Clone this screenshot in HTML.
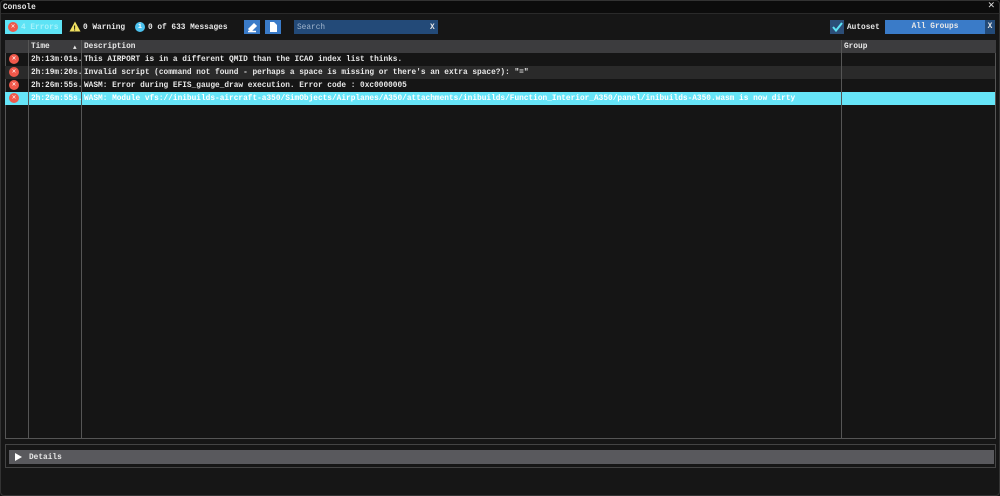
<!DOCTYPE html><html><head><style>
*{margin:0;padding:0;box-sizing:border-box}
body{width:1000px;height:496px;background:#161616;font-family:"Liberation Mono",monospace;font-size:7.8px;font-weight:bold;color:#e8e8e8;position:relative;overflow:hidden}
.a{position:absolute}
.ic{position:absolute;width:10px;height:10px;border-radius:50%;background:#f0584a;color:#fff;font-size:7px;line-height:10px;text-align:center}
.row{position:absolute;left:5px;width:990px;height:13px;line-height:15px}
.t{position:absolute;left:26px}
.d{position:absolute;left:79px;white-space:nowrap}
</style></head><body>
<div class="a" style="left:0;top:0;width:1000px;height:14px;background:#0c0c0c;border-bottom:1px solid #2a2a2a"></div>
<div class="a" style="left:3px;top:3px;line-height:10px">Console</div>
<div class="a" style="left:988px;top:1px;font-size:11px;line-height:11px;color:#ddd">✕</div>
<div class="a" style="left:0;top:0;width:1000px;height:496px;border:1px solid #333;border-radius:4px"></div>
<div class="a" style="left:5px;top:20px;width:57px;height:14px;background:#5ee3f5"></div>
<div class="ic" style="left:8px;top:22px">✕</div>
<div class="a" style="left:21px;top:21px;line-height:14px;color:#a6f2fb">4 Errors</div>
<svg class="a" style="left:69px;top:21px" width="12" height="11"><path d="M6 0.5L11.5 10.5H0.5Z" fill="#f0e060"/><text x="4.5" y="9.5" font-size="7" fill="#000" font-family="Liberation Sans">!</text></svg>
<div class="a" style="left:83px;top:21px;line-height:14px">0 Warning</div>
<div class="a" style="left:135px;top:22px;width:10px;height:10px;border-radius:50%;background:#4cc2ef;color:#fff;font-size:7px;line-height:10px;text-align:center">i</div>
<div class="a" style="left:148px;top:21px;line-height:14px">0 of 633 Messages</div>
<div class="a" style="left:244px;top:20px;width:16px;height:14px;background:#3a7bc8"></div>
<svg class="a" style="left:246px;top:21px" width="12" height="12"><path d="M3 8L8 3L10 5L5 10ZM2 10.5H10" stroke="#fff" stroke-width="1.5" fill="#fff"/></svg>
<div class="a" style="left:265px;top:20px;width:16px;height:14px;background:#3a7bc8"></div>
<svg class="a" style="left:268px;top:21px" width="10" height="12"><path d="M2 1H6L9 4V11H2Z" fill="#fff"/></svg>
<div class="a" style="left:294px;top:20px;width:144px;height:14px;background:#234a78"></div>
<div class="a" style="left:297px;top:21px;line-height:14px;color:#9fb4cc;font-weight:normal">Search</div>
<div class="a" style="left:430px;top:21px;line-height:14px">X</div>
<div class="a" style="left:830px;top:20px;width:14px;height:14px;background:#2c4e78"></div>
<svg class="a" style="left:831px;top:21px" width="12" height="12"><path d="M2 6L5 9.5L11 2" stroke="#5ee3f5" stroke-width="2" fill="none"/></svg>
<div class="a" style="left:847px;top:21px;line-height:14px">Autoset</div>
<div class="a" style="left:885px;top:20px;width:100px;height:14px;background:#3a7bc8;text-align:center;line-height:15px">All Groups</div>
<div class="a" style="left:985px;top:20px;width:10px;height:14px;background:#234a78;text-align:center;line-height:15px">X</div>
<div class="a" style="left:5px;top:40px;width:991px;height:399px;border:1px solid #555;background:#151515"></div>
<div class="a" style="left:5px;top:40px;width:991px;height:13px;background:#3c3c3e"></div>
<div class="row" style="top:66px;background:#2a2a2a"></div>
<div class="row" style="top:92px;background:#66e5f8"></div>
<div class="a" style="left:28px;top:40px;width:1px;height:398px;background:#555"></div>
<div class="a" style="left:81px;top:40px;width:1px;height:398px;background:#555"></div>
<div class="a" style="left:841px;top:40px;width:1px;height:398px;background:#555"></div>
<div class="row" style="top:40px"><span class="t">Time</span><span class="a" style="left:68px;font-size:6px">▲</span><span class="d">Description</span><span class="a" style="left:839px">Group</span></div>
<div class="row" style="top:53px"><span class="ic" style="left:4px;top:1px;line-height:10px">✕</span><span class="t">2h:13m:01s.</span><span class="d">This AIRPORT is in a different QMID than the ICAO index list thinks.</span></div>
<div class="row" style="top:66px"><span class="ic" style="left:4px;top:1px;line-height:10px">✕</span><span class="t">2h:19m:20s.</span><span class="d">Invalid script (command not found - perhaps a space is missing or there's an extra space?): "="</span></div>
<div class="row" style="top:79px"><span class="ic" style="left:4px;top:1px;line-height:10px">✕</span><span class="t">2h:26m:55s.</span><span class="d">WASM: Error during EFIS_gauge_draw execution. Error code : 0xc0000005</span></div>
<div class="row" style="top:92px;color:#fff"><span class="ic" style="left:4px;top:1px;line-height:10px">✕</span><span class="t">2h:26m:55s.</span><span class="d">WASM: Module vfs://inibuilds-aircraft-a350/SimObjects/Airplanes/A350/attachments/inibuilds/Function_Interior_A350/panel/inibuilds-A350.wasm is now dirty</span></div>
<div class="a" style="left:5px;top:444px;width:991px;height:24px;border:1px solid #444"></div>
<div class="a" style="left:9px;top:450px;width:985px;height:14px;background:#59595d"></div>
<svg class="a" style="left:15px;top:453px" width="8" height="8"><path d="M0 0L7 4L0 8Z" fill="#fff"/></svg>
<div class="a" style="left:29px;top:451px;line-height:14px">Details</div>
</body></html>
